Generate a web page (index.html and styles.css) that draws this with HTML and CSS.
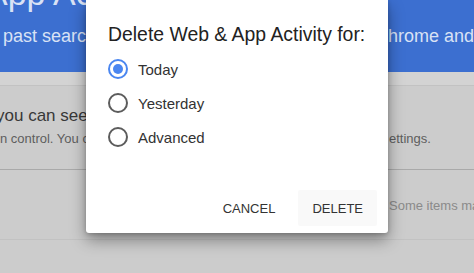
FILE: index.html
```html
<!DOCTYPE html>
<html lang="en">
<head>
  <meta charset="UTF-8" />
  <meta name="viewport" content="width=device-width, initial-scale=1.0" />
  <title>Delete activity</title>
  <link rel="stylesheet" href="styles.css">
</head>
<body>
  <!-- page behind the dialog -->
  <div class="page">
    <div class="header">
      <div class="head-title">Web &amp; App Activity</div>
      <div class="head-line">
        <span class="grow">past searches and other activity</span>
        <span class="tail">Chrome and</span>
      </div>
    </div>
    <div class="subbar"></div>
    <div class="content">
      <div class="lead">you can see and manage your activity</div>
      <div class="note">
        <span class="grow">n control. You can change your settings</span>
        <span class="tail">ettings.</span>
      </div>
      <div class="divider"></div>
      <div class="note faint">
        <span class="grow"></span>
        <span class="tail">Some items may</span>
      </div>
    </div>
    <div class="footline"></div>
  </div>

  <!-- dialog -->
  <div class="dialog">
    <div class="dialog-title">Delete Web &amp; App Activity for:</div>
    <div class="options">
      <div class="option"><span class="radio checked"></span>Today</div>
      <div class="option"><span class="radio"></span>Yesterday</div>
      <div class="option"><span class="radio"></span>Advanced</div>
    </div>
    <div class="actions">
      <button class="btn">CANCEL</button>
      <button class="btn primary">DELETE</button>
    </div>
  </div>
</body>
</html>
```

FILE: styles.css
```css
html, body {
  margin: 0;
  padding: 0;
  overflow: hidden;
  height: 100vh;
  font-family: "Liberation Sans", Arial, sans-serif;
  background: #cccccc;
}

.page {
  height: 100vh;
}

.grow {
  flex: 1;
  min-width: 0;
  overflow: hidden;
}
.tail {
  flex-shrink: 0;
  width: 85px;
  overflow: hidden;
}

.header {
  height: 72px;
  background: #3c6fd0;
  color: #d9e2f5;
  overflow: hidden;
}
.head-title {
  font-size: 34px;
  line-height: 34px;
  margin-top: -24px;
  margin-left: -124px;
  white-space: nowrap;
}
.head-line {
  display: flex;
  font-size: 18px;
  line-height: 22px;
  margin-top: 15px;
  padding-left: 3px;
  white-space: nowrap;
}
.head-line .tail {
  width: 99px;
}

.subbar {
  height: 13px;
  background: #d3d3d3;
  border-bottom: 1px solid #c2c2c2;
}

.content {
  padding-top: 20px;
}
.lead {
  font-size: 17px;
  line-height: 20px;
  color: #383838;
  margin-left: -4px;
  white-space: nowrap;
}
.note {
  display: flex;
  font-size: 13px;
  line-height: 16px;
  color: #5e5e5e;
  margin-top: 5px;
  white-space: nowrap;
}
.note.faint {
  color: #8a8a8a;
  margin-top: 28px;
}
.divider {
  height: 1px;
  background: #a9a9a9;
  margin-top: 22px;
}
.footline {
  height: 1px;
  background: #c2c2c2;
  margin-top: 25px;
}

.dialog {
  position: absolute;
  top: 0;
  left: 86px;
  width: 302px;
  height: 233px;
  background: #fff;
  border-radius: 0 0 3px 3px;
  box-shadow: 0 7px 16px rgba(0,0,0,0.38), 0 1px 4px rgba(0,0,0,0.2);
  display: flex;
  flex-direction: column;
}
.dialog-title {
  font-size: 19.4px;
  line-height: 22px;
  color: #222;
  padding: 23px 22px 0;
  white-space: nowrap;
}
.options {
  margin-top: 7px;
  padding-left: 22px;
}
.option {
  display: flex;
  align-items: center;
  height: 34px;
  font-size: 15px;
  color: #333;
}
.radio {
  width: 20px;
  height: 20px;
  box-sizing: border-box;
  border: 2px solid #5c5c5c;
  border-radius: 50%;
  margin-right: 10px;
  display: flex;
  align-items: center;
  justify-content: center;
}
.radio.checked {
  border-color: #4a86f0;
}
.radio.checked::after {
  content: '';
  width: 10px;
  height: 10px;
  border-radius: 50%;
  background: #4a86f0;
}

.actions {
  margin-top: auto;
  display: flex;
  justify-content: flex-end;
  gap: 9px;
  padding: 0 11px 7px 0;
}
.btn {
  height: 36px;
  padding: 0 14px;
  border: none;
  border-radius: 2px;
  background: transparent;
  font-family: "Liberation Sans", Arial, sans-serif;
  font-size: 13px;
  color: #333;
  cursor: pointer;
}
.btn.primary {
  background: #f9f9f9;
}
```
